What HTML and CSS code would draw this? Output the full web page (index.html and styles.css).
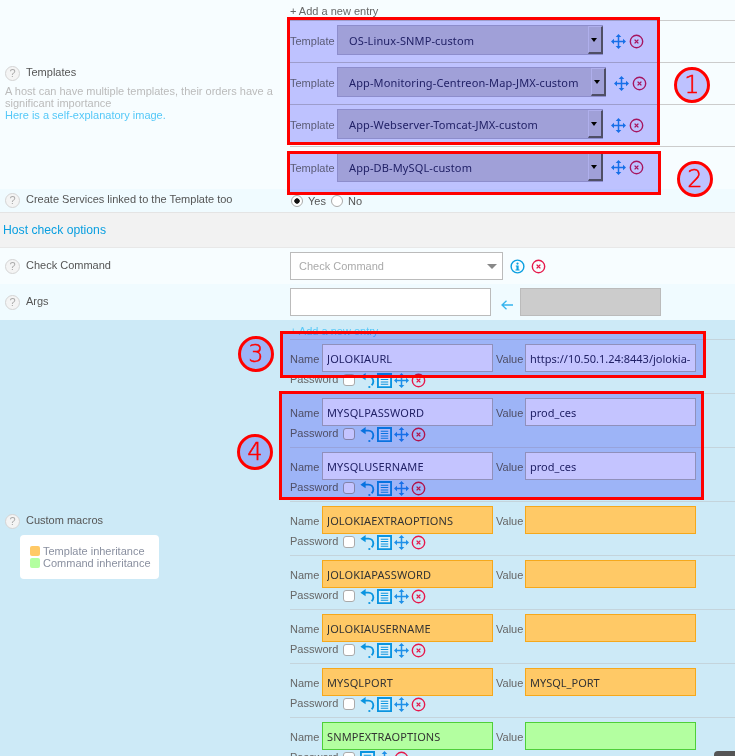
FILE: index.html
```html
<!DOCTYPE html>
<html lang="en">
<head>
    <meta charset="UTF-8">
    <title>Host configuration</title>
    <link rel="stylesheet" href="styles.css">
</head>
<body>
    <svg class="sprite" width="0" height="0">
        <symbol id="i-move" viewBox="0 0 16 16">
            <path d="M8 2.5v11M2.5 8h11" fill="none" stroke="currentColor" stroke-width="1.6"/>
            <path d="M8 0l3 3.2H5zM8 16l-3-3.2h6zM0 8l3.2-3v6zM16 8l-3.2 3V5z" fill="currentColor"/>
        </symbol>
        <symbol id="i-close" viewBox="0 0 16 16">
            <circle cx="8" cy="8" r="6.6" fill="none" stroke="currentColor" stroke-width="1.5"/>
            <path d="M6 6l4 4M10 6l-4 4" fill="none" stroke="currentColor" stroke-width="1.5"/>
        </symbol>
        <symbol id="i-info" viewBox="0 0 16 16">
            <circle cx="8" cy="8" r="6.8" fill="none" stroke="currentColor" stroke-width="1.5"/>
            <circle cx="8" cy="4.8" r="1.2" fill="currentColor"/>
            <path d="M6.2 7h3v4.2h1v1.1H5.8v-1.1h1.1V8.1h-.7z" fill="currentColor"/>
        </symbol>
        <symbol id="i-undo" viewBox="0 0 16 16">
            <path d="M3.5 3.8H9a5.2 5.2 0 0 1 5.2 5.2c0 1.8-.8 3.1-1.8 4" fill="none" stroke="currentColor" stroke-width="2"/>
            <path d="M6 0v7.8L0.4 3.9z" fill="currentColor"/>
            <path d="M9 14h2v1.9H9z" fill="currentColor"/>
        </symbol>
        <symbol id="i-doc" viewBox="0 0 16 16">
            <path d="M1 1h14v14H1z" fill="#fff" fill-opacity=".35" stroke="currentColor" stroke-width="2"/>
            <path d="M4 4.5h8M4 7h8M4 9.5h8M4 12h8" fill="none" stroke="currentColor" stroke-width="1.1"/>
        </symbol>
        <symbol id="i-left" viewBox="0 0 12 10">
            <path d="M1 5H12M5.5 .7L1 5l4.5 4.3" fill="none" stroke="currentColor" stroke-width="1.3"/>
        </symbol>
    </svg>

    <div class="form">
        <section class="row row-light row-templates">
            <div class="label-col">
                <div class="label-head"><span class="help">?</span>Templates</div>
                <p class="hint">A host can have multiple templates, their orders have a significant importance<br><a href="#">Here is a self-explanatory image.</a></p>
            </div>
            <div class="field-col">
                <div class="add-entry">+ Add a new entry</div>
                <div class="clone">
                    <span class="tag">Template</span>
                    <div class="old-select"><span class="old-value">OS-Linux-SNMP-custom</span><span class="old-arrow"></span></div>
                    <svg class="icon move"><use href="#i-move"/></svg>
                    <svg class="icon close"><use href="#i-close"/></svg>
                </div>
                <div class="clone">
                    <span class="tag">Template</span>
                    <div class="old-select old-select-wide"><span class="old-value">App-Monitoring-Centreon-Map-JMX-custom</span><span class="old-arrow"></span></div>
                    <svg class="icon move"><use href="#i-move"/></svg>
                    <svg class="icon close"><use href="#i-close"/></svg>
                </div>
                <div class="clone">
                    <span class="tag">Template</span>
                    <div class="old-select"><span class="old-value">App-Webserver-Tomcat-JMX-custom</span><span class="old-arrow"></span></div>
                    <svg class="icon move"><use href="#i-move"/></svg>
                    <svg class="icon close"><use href="#i-close"/></svg>
                </div>
                <div class="clone">
                    <span class="tag">Template</span>
                    <div class="old-select"><span class="old-value">App-DB-MySQL-custom</span><span class="old-arrow"></span></div>
                    <svg class="icon move"><use href="#i-move"/></svg>
                    <svg class="icon close"><use href="#i-close"/></svg>
                </div>
            </div>
        </section>

        <section class="row row-pale row-linked">
            <div class="label-head"><span class="help">?</span>Create Services linked to the Template too</div>
            <div class="radios">
                <input type="radio" name="linked" checked><span>Yes</span>
                <input type="radio" name="linked"><span>No</span>
            </div>
        </section>

        <h3 class="group-title">Host check options</h3>

        <section class="row row-light row-command">
            <div class="label-head"><span class="help">?</span>Check Command</div>
            <div class="command-field">
                <div class="combo"><span>Check Command</span><i class="combo-arrow"></i></div>
                <svg class="icon info"><use href="#i-info"/></svg>
                <svg class="icon close-red"><use href="#i-close"/></svg>
            </div>
        </section>

        <section class="row row-pale row-args">
            <div class="label-head"><span class="help">?</span>Args</div>
            <div class="args-field">
                <input class="args-input" type="text">
                <svg class="arrow-left"><use href="#i-left"/></svg>
                <div class="args-box"></div>
            </div>
        </section>

        <section class="row row-macros">
            <div class="label-col macros-label">
                <div class="label-head"><span class="help">?</span>Custom macros</div>
                <div class="legend">
                    <div><i class="swatch swatch-orange"></i>Template inheritance</div>
                    <div><i class="swatch swatch-green"></i>Command inheritance</div>
                </div>
            </div>
            <div class="field-col">
                <div class="add-entry add-entry-blue">+ Add a new entry</div>
                <div class="macro">
                    <div class="macro-line">
                        <label>Name</label><input type="text" value="JOLOKIAURL">
                        <label>Value</label><input class="macro-value" type="text" value="https://10.50.1.24:8443/jolokia-v">
                    </div>
                    <div class="macro-tools">
                        <span>Password</span><input type="checkbox">
                        <svg class="icon undo"><use href="#i-undo"/></svg>
                        <svg class="icon doc"><use href="#i-doc"/></svg>
                        <svg class="icon move"><use href="#i-move"/></svg>
                        <svg class="icon close-red"><use href="#i-close"/></svg>
                    </div>
                </div>
                <div class="macro">
                    <div class="macro-line">
                        <label>Name</label><input type="text" value="MYSQLPASSWORD">
                        <label>Value</label><input class="macro-value" type="text" value="prod_ces">
                    </div>
                    <div class="macro-tools">
                        <span>Password</span><input type="checkbox">
                        <svg class="icon undo"><use href="#i-undo"/></svg>
                        <svg class="icon doc"><use href="#i-doc"/></svg>
                        <svg class="icon move"><use href="#i-move"/></svg>
                        <svg class="icon close-red"><use href="#i-close"/></svg>
                    </div>
                </div>
                <div class="macro">
                    <div class="macro-line">
                        <label>Name</label><input type="text" value="MYSQLUSERNAME">
                        <label>Value</label><input class="macro-value" type="text" value="prod_ces">
                    </div>
                    <div class="macro-tools">
                        <span>Password</span><input type="checkbox">
                        <svg class="icon undo"><use href="#i-undo"/></svg>
                        <svg class="icon doc"><use href="#i-doc"/></svg>
                        <svg class="icon move"><use href="#i-move"/></svg>
                        <svg class="icon close-red"><use href="#i-close"/></svg>
                    </div>
                </div>
                <div class="macro macro-orange">
                    <div class="macro-line">
                        <label>Name</label><input type="text" value="JOLOKIAEXTRAOPTIONS">
                        <label>Value</label><input class="macro-value" type="text" value="">
                    </div>
                    <div class="macro-tools">
                        <span>Password</span><input type="checkbox">
                        <svg class="icon undo"><use href="#i-undo"/></svg>
                        <svg class="icon doc"><use href="#i-doc"/></svg>
                        <svg class="icon move"><use href="#i-move"/></svg>
                        <svg class="icon close-red"><use href="#i-close"/></svg>
                    </div>
                </div>
                <div class="macro macro-orange">
                    <div class="macro-line">
                        <label>Name</label><input type="text" value="JOLOKIAPASSWORD">
                        <label>Value</label><input class="macro-value" type="text" value="">
                    </div>
                    <div class="macro-tools">
                        <span>Password</span><input type="checkbox">
                        <svg class="icon undo"><use href="#i-undo"/></svg>
                        <svg class="icon doc"><use href="#i-doc"/></svg>
                        <svg class="icon move"><use href="#i-move"/></svg>
                        <svg class="icon close-red"><use href="#i-close"/></svg>
                    </div>
                </div>
                <div class="macro macro-orange">
                    <div class="macro-line">
                        <label>Name</label><input type="text" value="JOLOKIAUSERNAME">
                        <label>Value</label><input class="macro-value" type="text" value="">
                    </div>
                    <div class="macro-tools">
                        <span>Password</span><input type="checkbox">
                        <svg class="icon undo"><use href="#i-undo"/></svg>
                        <svg class="icon doc"><use href="#i-doc"/></svg>
                        <svg class="icon move"><use href="#i-move"/></svg>
                        <svg class="icon close-red"><use href="#i-close"/></svg>
                    </div>
                </div>
                <div class="macro macro-orange">
                    <div class="macro-line">
                        <label>Name</label><input type="text" value="MYSQLPORT">
                        <label>Value</label><input class="macro-value" type="text" value="MYSQL_PORT">
                    </div>
                    <div class="macro-tools">
                        <span>Password</span><input type="checkbox">
                        <svg class="icon undo"><use href="#i-undo"/></svg>
                        <svg class="icon doc"><use href="#i-doc"/></svg>
                        <svg class="icon move"><use href="#i-move"/></svg>
                        <svg class="icon close-red"><use href="#i-close"/></svg>
                    </div>
                </div>
                <div class="macro macro-green">
                    <div class="macro-line">
                        <label>Name</label><input type="text" value="SNMPEXTRAOPTIONS">
                        <label>Value</label><input class="macro-value" type="text" value="">
                    </div>
                    <div class="macro-tools">
                        <span>Password</span><input type="checkbox">
                        <svg class="icon doc"><use href="#i-doc"/></svg>
                        <svg class="icon move"><use href="#i-move"/></svg>
                        <svg class="icon close-red"><use href="#i-close"/></svg>
                    </div>
                </div>
            </div>
        </section>
    </div>

    <!-- annotations drawn over the form -->
    <div class="mark mark-1"></div>
    <div class="mark mark-2"></div>
    <div class="mark mark-3"></div>
    <div class="mark mark-4"></div>
    <div class="badge badge-1"><span>1</span></div>
    <div class="badge badge-2"><span>2</span></div>
    <div class="badge badge-3"><span>3</span></div>
    <div class="badge badge-4"><span>4</span></div>
    <div class="corner-tab"></div>
</body>
</html>
```

FILE: styles.css
```css
html, body {
    height: 756px;
    overflow: hidden;
}
body {
    margin: 0;
    position: relative;
    font-family: "Liberation Sans", Arial, sans-serif;
    font-size: 11px;
    color: #666;
    background: #f7fdff;
}
.sprite {
    position: absolute;
}
.row {
    display: grid;
    grid-template-columns: 290px 1fr;
    align-items: center;
    box-sizing: border-box;
}
.row-light { background: #f7fdff; }
.row-pale { background: #f0fbff; }
.row-templates { height: 189px; }
.row-templates .label-col { padding-bottom: 2px; }
.row-linked {
    height: 24px;
    border-bottom: 1px solid #e4e4e4;
}
.row-command { height: 36px; }
.row-args { height: 36px; }
.row-macros {
    background: #cdeaf7;
    align-items: start;
    height: 436px;
}
.label-head {
    display: flex;
    align-items: flex-start;
    padding-left: 5px;
    line-height: 13px;
    color: #555;
}
.help {
    width: 15px;
    height: 15px;
    box-sizing: border-box;
    margin-right: 6px;
    border: 1.5px solid #d4d4d4;
    border-radius: 50%;
    background: #f4f4f4;
    color: #aaa;
    font-size: 11px;
    line-height: 12px;
    text-align: center;
}
.hint {
    margin: 4px 15px 0 5px;
    line-height: 12px;
    color: #bbb;
}
.hint a {
    color: #55c8f8;
    text-decoration: none;
}
.field-col {
    min-width: 0;
}
.add-entry {
    height: 20px;
    padding-top: 5px;
    box-sizing: border-box;
    line-height: 13px;
    color: #666;
}
.add-entry-blue {
    height: 19px;
    color: #55c8f8;
}
.clone {
    display: flex;
    align-items: center;
    height: 42px;
    padding-bottom: 3px;
    box-sizing: border-box;
    border-top: 1px solid #ccc;
}
.clone:last-child {
    height: 43px;
}
.tag {
    width: 47px;
    flex: none;
    margin-top: 2px;
    color: #777;
}
.old-select {
    display: flex;
    align-items: stretch;
    width: 266px;
    height: 30px;
    box-sizing: border-box;
    border: 1px solid #b8b8cc;
    border-right: 0;
    background: #d0d0d8;
    margin-right: 8px;
}
.old-select-wide { width: 269px; }
.old-value {
    flex: 1;
    padding-left: 11px;
    font-family: "Noto Sans", sans-serif;
    font-size: 11px;
    letter-spacing: .13px;
    line-height: 29px;
    color: #2a2a66;
    white-space: nowrap;
}
.old-arrow {
    position: relative;
    width: 15px;
    border-style: solid;
    border-width: 1px 2px 2px 1px;
    border-color: #e4e4ec #666 #666 #e4e4ec;
    box-sizing: border-box;
}
.old-arrow::after {
    content: "";
    position: absolute;
    left: 2px;
    top: 11px;
    border: 3.5px solid transparent;
    border-top: 4px solid #000;
    border-bottom: 0;
}
.icon {
    width: 15px;
    height: 15px;
    flex: none;
}
.clone .icon {
    margin-top: 2px;
}
.move { color: #1e90e8; }
.close { color: #d81b60; margin-left: 3px; }
.close-red { color: #e6194b; }
.info { color: #0a9fe0; }
.undo, .doc { color: #0a94e0; }
.radios {
    display: flex;
    align-items: center;
    padding-left: 1px;
    color: #555;
}
.radios input {
    appearance: none;
    width: 12px;
    height: 12px;
    box-sizing: border-box;
    margin: 0 5px 0 0;
    border: 1px solid #aaa;
    border-radius: 50%;
    background: #fff;
}
.radios input:checked {
    background: radial-gradient(circle, #111 0 2.4px, #fff 3px);
}
.radios span {
    margin-right: 5px;
}
.group-title {
    margin: 0;
    height: 35px;
    box-sizing: border-box;
    padding-left: 3px;
    border-bottom: 1px solid #e8e8e8;
    background: #f2f2f2;
    font-size: 12.2px;
    font-weight: normal;
    line-height: 34px;
    color: #0a9fe0;
}
.command-field {
    display: flex;
    align-items: center;
    gap: 7px;
}
.command-field .close-red {
    margin-left: -1px;
}
.combo {
    display: flex;
    align-items: center;
    justify-content: space-between;
    width: 213px;
    height: 28px;
    box-sizing: border-box;
    padding: 0 5px 0 8px;
    border: 1px solid #bbb;
    background: #fff;
    color: #aaa;
}
.combo-arrow {
    border: 5px solid transparent;
    border-top: 5px solid #888;
    border-bottom: 0;
}
.args-field {
    display: flex;
    align-items: center;
}
.args-input {
    width: 201px;
    height: 28px;
    box-sizing: border-box;
    border: 1px solid #bbb;
    background: #fff;
}
.arrow-left {
    width: 12px;
    height: 10px;
    margin: 6px 7px 0 10px;
    color: #35b4ee;
}
.args-box {
    width: 141px;
    height: 28px;
    box-sizing: border-box;
    border: 1px solid #bbb;
    background: #ccc;
}
.macros-label {
    padding-top: 194px;
}
.legend {
    width: 139px;
    height: 44px;
    margin: 6px 0 0 20px;
    padding: 10px;
    box-sizing: border-box;
    border-radius: 4px;
    background: #fff;
    line-height: 12px;
    color: #8a90a0;
    white-space: nowrap;
}
.legend div {
    display: flex;
    align-items: center;
}
.swatch {
    flex: none;
    width: 10px;
    height: 10px;
    margin-right: 3px;
    border-radius: 2px;
}
.swatch-orange { background: #ffc966; }
.swatch-green { background: #b3ffa0; }
.macro {
    height: 54px;
    box-sizing: border-box;
    padding-top: 4px;
    border-top: 1px solid #c4d4dc;
}
.macro-line {
    display: flex;
    align-items: center;
}
.macro-line label {
    width: 32px;
    margin-top: 2px;
    color: #666;
}
.macro-line label:nth-of-type(2) {
    margin-left: 3px;
    width: 29px;
}
.macro-line input {
    width: 171px;
    height: 28px;
    box-sizing: border-box;
    padding: 0 5px 0 4px;
    border: 1px solid #bbb;
    border-radius: 0;
    outline: 0;
    background: #fff;
    font-family: "Noto Sans", sans-serif;
    font-size: 11px;
    letter-spacing: .13px;
    color: #2a2a66;
}
.macro-line .macro-value {
    letter-spacing: 0;
}
.macro-orange input {
    background: #ffc966;
    border-color: #f5a81c;
    color: #333;
}
.macro-green input {
    background: #b3ffa0;
    border-color: #4fcf3a;
    color: #333;
}
.macro-tools {
    display: flex;
    align-items: center;
    height: 16px;
    color: #666;
}
.macro-tools span {
    margin-bottom: 2px;
}
.macro-tools input {
    appearance: none;
    width: 12px;
    height: 12px;
    box-sizing: border-box;
    margin: 0 5px;
    border: 1px solid #aaa;
    border-radius: 3px;
    background: #fff;
}
.macro-tools .icon {
    margin-right: 2px;
}
.mark {
    position: absolute;
    box-sizing: border-box;
    border: 3px solid #f00;
}
.mark::before,
.badge::before {
    content: "";
    position: absolute;
    inset: 0;
    background: #c4c4ff;
    mix-blend-mode: multiply;
}
.mark-1 { left: 287px; top: 17px; width: 373px; height: 128px; }
.mark-2 { left: 287px; top: 151px; width: 374px; height: 44px; }
.mark-3 { left: 280px; top: 331px; width: 426px; height: 47px; }
.mark-4 { left: 279px; top: 391px; width: 425px; height: 109px; }
.badge {
    position: absolute;
    width: 36px;
    height: 36px;
    box-sizing: border-box;
    border: 3px solid #f00;
    border-radius: 50%;
    text-align: center;
    font-family: "DejaVu Sans", sans-serif;
    font-size: 24px;
    font-weight: 200;
    line-height: 30px;
    color: #f00;
    -webkit-text-stroke: .5px #f00;
}
.badge::before {
    border-radius: 50%;
}
.badge span {
    position: relative;
}
.badge-1 { left: 674px; top: 67px; }
.badge-2 { left: 677px; top: 161px; }
.badge-3 { left: 238px; top: 336px; }
.badge-4 { left: 237px; top: 434px; }
.corner-tab {
    position: absolute;
    left: 714px;
    top: 751px;
    width: 21px;
    height: 5px;
    border-radius: 4px 0 0 0;
    background: #555;
}
```
